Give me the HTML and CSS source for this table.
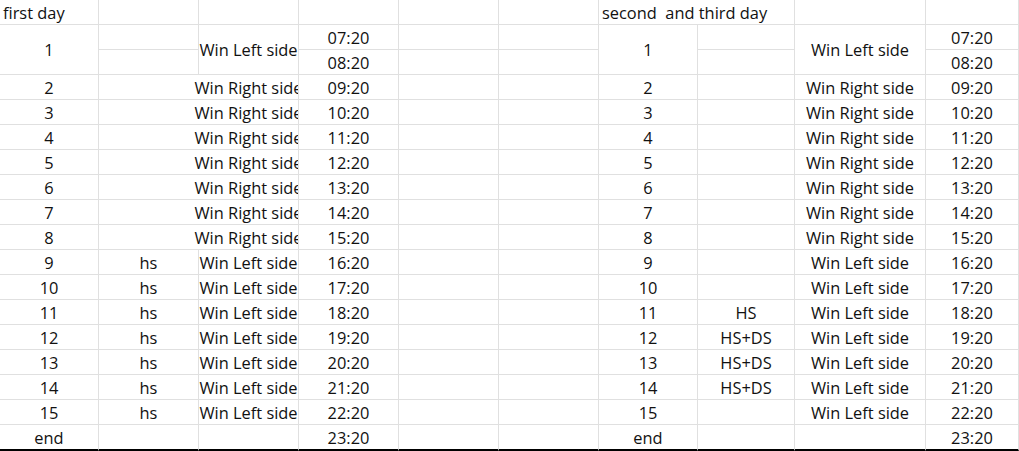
FILE: index.html
```html
<!DOCTYPE html>
<html lang="en">
<head>
<meta charset="utf-8">
<title>Schedule</title>
<link rel="stylesheet" href="styles.css">
</head>
<body>
<div class="sheet">
  <!-- header -->
  <div class="c hd">first day</div><div class="c"></div><div class="c"></div><div class="c"></div><div class="c"></div><div class="c"></div>
  <div class="c hd w2">second  and third day</div><div class="c"></div><div class="c"></div>

  <!-- row 1 (two sub rows) -->
  <div class="c r2">1</div><div class="c"></div><div class="c r2">Win Left side</div><div class="c">07:20</div><div class="c"></div><div class="c"></div>
  <div class="c r2">1</div><div class="c"></div><div class="c r2">Win Left side</div><div class="c">07:20</div>
  <div class="c"></div><div class="c">08:20</div><div class="c"></div><div class="c"></div><div class="c"></div><div class="c">08:20</div>

  <div class="c">2</div><div class="c w2 spill"><span class="in">Win Right side</span></div><div class="c">09:20</div><div class="c"></div><div class="c"></div>
  <div class="c">2</div><div class="c"></div><div class="c">Win Right side</div><div class="c">09:20</div>

  <div class="c">3</div><div class="c w2 spill"><span class="in">Win Right side</span></div><div class="c">10:20</div><div class="c"></div><div class="c"></div>
  <div class="c">3</div><div class="c"></div><div class="c">Win Right side</div><div class="c">10:20</div>

  <div class="c">4</div><div class="c w2 spill"><span class="in">Win Right side</span></div><div class="c">11:20</div><div class="c"></div><div class="c"></div>
  <div class="c">4</div><div class="c"></div><div class="c">Win Right side</div><div class="c">11:20</div>

  <div class="c">5</div><div class="c w2 spill"><span class="in">Win Right side</span></div><div class="c">12:20</div><div class="c"></div><div class="c"></div>
  <div class="c">5</div><div class="c"></div><div class="c">Win Right side</div><div class="c">12:20</div>

  <div class="c">6</div><div class="c w2 spill"><span class="in">Win Right side</span></div><div class="c">13:20</div><div class="c"></div><div class="c"></div>
  <div class="c">6</div><div class="c"></div><div class="c">Win Right side</div><div class="c">13:20</div>

  <div class="c">7</div><div class="c w2 spill"><span class="in">Win Right side</span></div><div class="c">14:20</div><div class="c"></div><div class="c"></div>
  <div class="c">7</div><div class="c"></div><div class="c">Win Right side</div><div class="c">14:20</div>

  <div class="c">8</div><div class="c w2 spill"><span class="in">Win Right side</span></div><div class="c">15:20</div><div class="c"></div><div class="c"></div>
  <div class="c">8</div><div class="c"></div><div class="c">Win Right side</div><div class="c">15:20</div>

  <div class="c">9</div><div class="c">hs</div><div class="c">Win Left side</div><div class="c">16:20</div><div class="c"></div><div class="c"></div>
  <div class="c">9</div><div class="c"></div><div class="c">Win Left side</div><div class="c">16:20</div>

  <div class="c">10</div><div class="c">hs</div><div class="c">Win Left side</div><div class="c">17:20</div><div class="c"></div><div class="c"></div>
  <div class="c">10</div><div class="c"></div><div class="c">Win Left side</div><div class="c">17:20</div>

  <div class="c">11</div><div class="c">hs</div><div class="c">Win Left side</div><div class="c">18:20</div><div class="c"></div><div class="c"></div>
  <div class="c">11</div><div class="c">HS</div><div class="c">Win Left side</div><div class="c">18:20</div>

  <div class="c">12</div><div class="c">hs</div><div class="c">Win Left side</div><div class="c">19:20</div><div class="c"></div><div class="c"></div>
  <div class="c">12</div><div class="c">HS+DS</div><div class="c">Win Left side</div><div class="c">19:20</div>

  <div class="c">13</div><div class="c">hs</div><div class="c">Win Left side</div><div class="c">20:20</div><div class="c"></div><div class="c"></div>
  <div class="c">13</div><div class="c">HS+DS</div><div class="c">Win Left side</div><div class="c">20:20</div>

  <div class="c">14</div><div class="c">hs</div><div class="c">Win Left side</div><div class="c">21:20</div><div class="c"></div><div class="c"></div>
  <div class="c">14</div><div class="c">HS+DS</div><div class="c">Win Left side</div><div class="c">21:20</div>

  <div class="c">15</div><div class="c">hs</div><div class="c">Win Left side</div><div class="c">22:20</div><div class="c"></div><div class="c"></div>
  <div class="c">15</div><div class="c"></div><div class="c">Win Left side</div><div class="c">22:20</div>

  <div class="c last">end</div><div class="c last"></div><div class="c last"></div><div class="c last">23:20</div><div class="c last"></div><div class="c last"></div>
  <div class="c last">end</div><div class="c last"></div><div class="c last"></div><div class="c last">23:20</div>
</div>
</body>
</html>
```

FILE: styles.css
```css
html, body {
  margin: 0;
  padding: 0;
  background: #ffffff;
}

body {
  font-family: "Open Sans", "Liberation Sans", sans-serif;
  font-size: 16.4px;
  color: #111111;
  overflow: hidden;
}

.sheet {
  display: grid;
  grid-template-columns: 99px 100px 100px 100px 100px 100px 99px 97px 131px 93px;
  grid-template-rows: repeat(17, 25px) 26px;
  width: 1019px;
}

.c {
  box-sizing: border-box;
  border-right: 1px solid #e0e0e0;
  border-bottom: 1px solid #e0e0e0;
  display: flex;
  align-items: center;
  justify-content: center;
  line-height: 24px;
  padding-top: 1px;
  white-space: nowrap;
  min-width: 0;
}

.hd {
  justify-content: flex-start;
  padding-left: 3px;
  white-space: pre;
}

.w2 {
  grid-column: span 2;
}

.r2 {
  grid-row: span 2;
}

.spill {
  justify-content: flex-end;
  overflow: hidden;
}

.spill .in {
  flex: 0 0 99px;
  width: 99px;
  display: flex;
  justify-content: center;
  white-space: nowrap;
}

.last {
  border-bottom: 2px solid #000000;
}
```
